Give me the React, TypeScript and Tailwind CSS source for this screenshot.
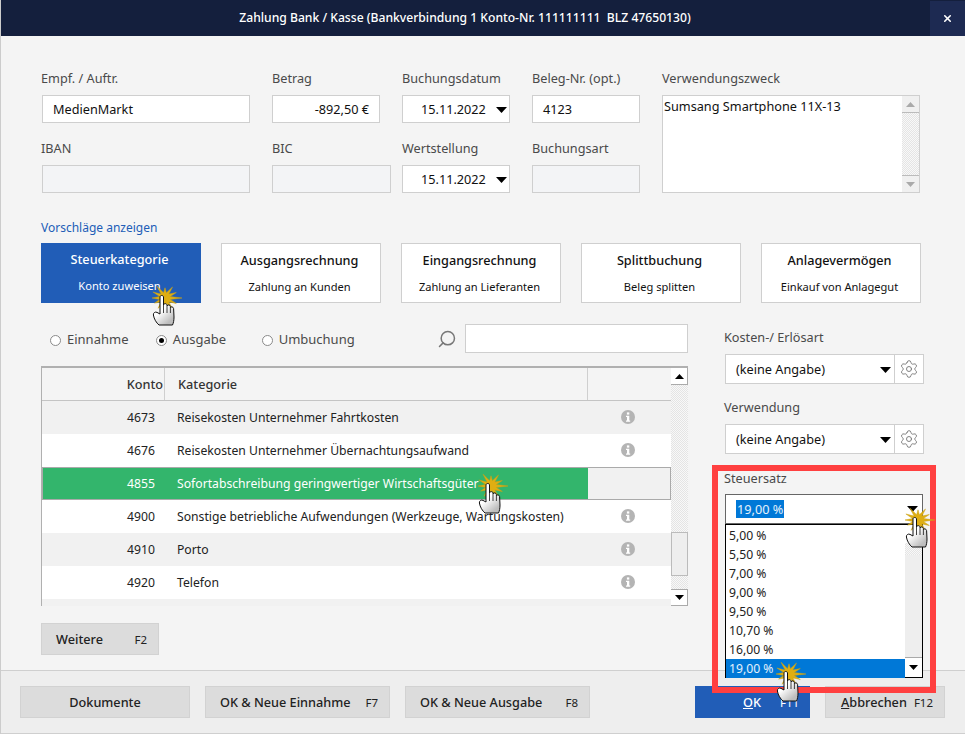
import React from "react";
import { Search, Settings, X } from "lucide-react";

const Arrow = ({ className = "" }: { className?: string }) => (
  <svg width="11" height="6" viewBox="0 0 11 6" className={className}><polygon points="0,0 11,0 5.5,6" fill="#000" /></svg>
);
const ArrowUp = () => (
  <svg width="9" height="5" viewBox="0 0 9 5"><polygon points="0,5 9,5 4.5,0" fill="#000" /></svg>
);
const ArrowDown = () => (
  <svg width="9" height="5" viewBox="0 0 9 5"><polygon points="0,0 9,0 4.5,5" fill="#000" /></svg>
);

const Label = ({ children, className = "" }: { children: React.ReactNode; className?: string }) => (
  <div className={`h-[17px] leading-[17px] text-[12.7px] text-[#4a4a4a] whitespace-nowrap ${className}`}>{children}</div>
);

const boxCls = "border border-[#cfcfcf] h-[28px] flex items-center pt-px text-[12.7px] text-[#111]";

const DateBox = () => (
  <div className={`${boxCls} bg-white w-[108px] justify-between pl-[18px] pr-[2px]`}>
    <span>15.11.2022</span>
    <Arrow />
  </div>
);

const Tile = ({ title, sub, active }: { title: string; sub: string; active?: boolean }) => (
  <div className={`w-[160px] h-[60px] flex flex-col items-center pt-[7px] pr-[3px] ${active ? "bg-[#215db7] text-white" : "bg-white border border-[#cfcfcf] text-[#111]"}`}>
    <div className="text-[12.7px] font-medium leading-[18px]">{title}</div>
    <div className="text-[11.1px] leading-[18px] mt-[9px]">{sub}</div>
  </div>
);

const Radio = ({ label, checked, className = "" }: { label: string; checked?: boolean; className?: string }) => (
  <div className={`flex items-center gap-[6px] pt-[3px] text-[13px] text-[#4a4a4a] ${className}`}>
    <div className="w-[11px] h-[11px] rounded-full bg-white border border-[#8a8a8a] flex items-center justify-center">
      {checked && <div className="w-[5px] h-[5px] rounded-full bg-black" />}
    </div>
    <span>{label}</span>
  </div>
);

const Info = () => (
  <svg width="14" height="14" viewBox="0 0 14 14">
    <circle cx="7" cy="7" r="7" fill="#b4b4b4" />
    <rect x="5.9" y="2.4" width="2.4" height="2.2" fill="#fff" />
    <polygon points="5,5.8 8.3,5.8 8.3,10.6 9.2,10.6 9.2,11.8 5,11.8 5,10.6 6,10.6 6,7 5,7" fill="#fff" />
  </svg>
);

const rows = [
  { k: "4673", t: "Reisekosten Unternehmer Fahrtkosten", bg: "bg-[#f1f1f1]" },
  { k: "4676", t: "Reisekosten Unternehmer Übernachtungsaufwand", bg: "bg-white" },
  { k: "4855", t: "Sofortabschreibung geringwertiger Wirtschaftsgüter", bg: "", sel: true },
  { k: "4900", t: "Sonstige betriebliche Aufwendungen (Werkzeuge, Wartungskosten)", bg: "bg-white" },
  { k: "4910", t: "Porto", bg: "bg-[#f1f1f1]" },
  { k: "4920", t: "Telefon", bg: "bg-white" },
];

const dither = "bg-[repeating-conic-gradient(#e4e4e4_0_25%,#f8f8f8_0_50%)] bg-[length:2px_2px]";

const GearSelect = () => (
  <div className="ml-px w-[199px] h-[30px] flex border border-[#cfcfcf] bg-white text-[12.7px] text-[#111]">
    <div className="flex-1 flex items-center justify-between pt-px pl-[10px] pr-[3px]">
      <span>(keine Angabe)</span>
      <Arrow />
    </div>
    <div className="w-[29px] border-l border-[#cfcfcf] flex items-center justify-center">
      <Settings size={20} strokeWidth={1.1} color="#777" />
    </div>
  </div>
);

const FootBtn = ({ children, k, className = "" }: { children: React.ReactNode; k?: string; className?: string }) => (
  <div className={`h-[32px] pt-px bg-[#dcdcdc] border border-[#d2d2d2] flex items-center text-[12.7px] font-medium text-[#222] whitespace-nowrap ${className}`}>
    <span>{children}</span>
    {k && <span className="text-[11.5px] font-normal ml-auto">{k}</span>}
  </div>
);

const starPts = (() => {
  const outer = [17, 13, 16, 12, 14, 12, 13, 14, 16, 12, 15, 13];
  const pts: string[] = [];
  outer.forEach((r, i) => {
    const a = (i / outer.length) * Math.PI * 2;
    const b = ((i + 0.5) / outer.length) * Math.PI * 2;
    pts.push(`${(25 + Math.cos(a) * r).toFixed(1)},${(14 + Math.sin(a) * r * 0.85).toFixed(1)}`);
    pts.push(`${(25 + Math.cos(b) * 5.5).toFixed(1)},${(14 + Math.sin(b) * 5.5).toFixed(1)}`);
  });
  return pts.join(" ");
})();

const Hand = ({ x, y }: { x: number; y: number }) => (
  <svg width="44" height="44" viewBox="0 0 44 44" className="absolute" style={{ left: x - 22, top: y - 14 }}>
    <defs>
      <linearGradient id="handg" x1="0" y1="0" x2="0.6" y2="1">
        <stop offset="0.55" stopColor="#ffffff" />
        <stop offset="1" stopColor="#bdbdbd" />
      </linearGradient>
    </defs>
    <polygon points={starPts} fill="#dfae12" stroke="#c8a015" strokeWidth="0.5" />
    <path
      d="M20 13 C20 11 23.5 11 23.5 13 L23.5 21 C24 19 27 19.3 27 21.3 L27 22 C27.6 20.3 30.4 20.6 30.4 22.6 L30.4 23.6 C31 22.4 33.4 22.7 33.6 24.6 L34 33 C34 36 33.5 39 32.5 41 L19 41 C16.5 39 14 35 13.4 31 C13 29 15.2 27.4 17 28.4 L20 30 Z"
      fill="url(#handg)"
      stroke="#111"
      strokeWidth="1"
      strokeLinejoin="round"
    />
    <path d="M23.5 21 L23.5 29 M27 22 L27 29 M30.4 23.6 L30.4 29" stroke="#111" strokeWidth="0.8" fill="none" />
  </svg>
);

export default function App() {
  return (
    <div className="relative w-[965px] h-[734px] overflow-hidden flex flex-col bg-[#f4f4f4] border-l border-[#cccccc] [font-family:'Noto_Sans',sans-serif]">
      {/* title bar */}
      <div className="h-[36px] -ml-px flex bg-[#141f3d] text-white shrink-0">
        <div className="flex-1 flex items-center justify-center text-[12.15px] font-medium">
          Zahlung Bank / Kasse (Bankverbindung 1 Konto-Nr. 111111111&nbsp; BLZ 47650130)
        </div>
        <div className="w-[35px] mt-px bg-[#1d2a52] flex items-center justify-center">
          <X size={11} strokeWidth={3.5} color="#fff" />
        </div>
      </div>

      {/* main */}
      <div className="flex-1 pl-[40px] pt-[34px] min-h-0">
        {/* form */}
        <div className="grid grid-cols-[231px_130px_130px_130px_258px]">
          <Label>Empf. / Auftr.</Label>
          <Label>Betrag</Label>
          <Label>Buchungsdatum</Label>
          <Label>Beleg-Nr. (opt.)</Label>
          <Label>Verwendungszweck</Label>
        </div>
        <div className="grid grid-cols-[231px_130px_130px_130px_258px] mt-[8px]">
          <div className="flex flex-col">
            <div className={`${boxCls} bg-white ml-px w-[208px] pl-[10px]`}>MedienMarkt</div>
            <Label className="mt-[17px] mb-[8px]">IBAN</Label>
            <div className={`${boxCls} bg-[#f3f4f6] ml-px w-[208px]`} />
          </div>
          <div className="flex flex-col">
            <div className={`${boxCls} bg-white w-[108px] justify-end pr-[10px]`}>-892,50 €</div>
            <Label className="mt-[17px] mb-[8px]">BIC</Label>
            <div className={`${boxCls} bg-[#f3f4f6] w-[119px]`} />
          </div>
          <div className="flex flex-col">
            <DateBox />
            <Label className="mt-[17px] mb-[8px]">Wertstellung</Label>
            <DateBox />
          </div>
          <div className="flex flex-col">
            <div className={`${boxCls} bg-white w-[108px] pl-[10px]`}>4123</div>
            <Label className="mt-[17px] mb-[8px]">Buchungsart</Label>
            <div className={`${boxCls} bg-[#f3f4f6] w-[108px]`} />
          </div>
          <div className="h-[98px] w-[258px] flex border border-[#cfcfcf] bg-white text-[12.7px] text-[#111]">
            <div className="flex-1 pl-[1px] leading-[20px]">Sumsang Smartphone 11X-13</div>
            <div className={`w-[17px] flex flex-col justify-between ${dither}`}>
              <div className="h-[17px] bg-[#f0f0f0] border-b border-[#bbb] flex items-center justify-center"><svg width="9" height="5" viewBox="0 0 9 5"><polygon points="0,5 9,5 4.5,0" fill="#aaa" /></svg></div>
              <div className="h-[17px] bg-[#f0f0f0] border-t border-[#bbb] flex items-center justify-center"><svg width="9" height="5" viewBox="0 0 9 5"><polygon points="0,0 9,0 4.5,5" fill="#aaa" /></svg></div>
            </div>
          </div>
        </div>

        <div className="mt-[27px] h-[16px] leading-[16px] text-[12px] text-[#215db7]">Vorschläge anzeigen</div>
        <div className="mt-[7px] flex gap-[20px]">
          <Tile active title="Steuerkategorie" sub="Konto zuweisen" />
          <Tile title="Ausgangsrechnung" sub="Zahlung an Kunden" />
          <Tile title="Eingangsrechnung" sub="Zahlung an Lieferanten" />
          <Tile title="Splittbuchung" sub="Beleg splitten" />
          <Tile title="Anlagevermögen" sub="Einkauf von Anlagegut" />
        </div>

        <div className="flex">
          {/* left column */}
          <div className="w-[647px]">
            <div className="mt-[21px] h-[29px] flex items-center">
              <Radio label="Einnahme" className="ml-[9px] w-[106px]" />
              <Radio label="Ausgabe" checked className="w-[106px]" />
              <Radio label="Umbuchung" className="w-[176px]" />
              <Search size={20} strokeWidth={1.8} color="#777" className="-scale-x-100 mr-[8px]" />
              <div className="w-[223px] h-[29px] bg-white border border-[#cfcfcf]" />
            </div>
            <div className="mt-[13px] h-[240px] flex border-t-2 border-l border-[#b0b0b0]">
              <div className="w-[629px] flex flex-col overflow-hidden">
                <div className="h-[33px] shrink-0 flex bg-[#f4f4f4] border-b border-[#c4c4c4] text-[12.7px] font-medium text-[#333]">
                  <div className="w-[123px] pr-[1px] pt-px border-r border-[#cfcfcf] flex items-center justify-end">Konto</div>
                  <div className="w-[423px] pl-[13px] pt-px border-r border-[#cfcfcf] flex items-center">Kategorie</div>
                </div>
                {rows.map((r) =>
                  r.sel ? (
                    <div key={r.k} className="h-[33px] shrink-0 flex border border-[#aaa] text-[12.2px] text-white">
                      <div className="w-[545px] bg-[#33b56c] pt-px flex items-center">
                        <div className="w-[112px] text-right">{r.k}</div>
                        <div className="pl-[22px] whitespace-nowrap">{r.t}</div>
                      </div>
                      <div className="flex-1 bg-[#f1f1f1]" />
                    </div>
                  ) : (
                    <div key={r.k} className={`h-[33px] shrink-0 pt-px flex items-center text-[12.2px] text-[#222] ${r.bg}`}>
                      <div className="w-[113px] text-right">{r.k}</div>
                      <div className="w-[433px] pl-[22px] whitespace-nowrap">{r.t}</div>
                      <div className="flex-1 flex justify-center pr-[4px] -mt-[2px]"><Info /></div>
                    </div>
                  )
                )}
                <div className="h-[8px] shrink-0 bg-[#f1f1f1]" />
              </div>
              <div className={`w-[17px] flex flex-col ${dither}`}>
                <div className="h-[17px] bg-white border-b border-r border-[#aaa] flex items-center justify-center"><ArrowUp /></div>
                <div className="mt-[147px] h-[44px] bg-[#eeeeee] border border-[#bbb]" />
                <div className="mt-auto h-[17px] bg-white border-t border-r border-b border-[#aaa] flex items-center justify-center"><ArrowDown /></div>
              </div>
            </div>
            <div className="mt-[17px] w-[118px] h-[32px] pt-px bg-[#dcdcdc] border border-[#d2d2d2] flex items-center pl-[14px] pr-[11px] text-[12.7px] font-medium text-[#222]">
              Weitere
              <span className="ml-auto text-[11.5px] font-normal">F2</span>
            </div>
          </div>

          {/* right column */}
          <div className="ml-[36px] w-[205px]">
            <Label className="mt-[26px] mb-[8px]">Kosten-/ Erlösart</Label>
            <GearSelect />
            <Label className="mt-[15px] mb-[8px]">Verwendung</Label>
            <GearSelect />
            <Label className="mt-[16px] mb-[7px]">Steuersatz</Label>
            <div className="ml-px w-[198px] h-[30px] border border-[#666] bg-white flex items-center pl-[10px] pr-[4px] justify-between text-[12.7px]">
              <span className="bg-[#0078d7] text-white/90 px-px leading-[18px]">19,00 %</span>
              <Arrow />
            </div>
          </div>
        </div>
      </div>

      {/* footer */}
      <div className="h-[64px] shrink-0 bg-[#eeeeee] border-t border-b border-[#cfcfcf] -ml-px pl-[20px] pt-[15px] flex">
        <FootBtn className="w-[170px] justify-center">Dokumente</FootBtn>
        <FootBtn k="F7" className="ml-[15px] w-[185px] pl-[14px] pr-[11px]">OK &amp; Neue Einnahme</FootBtn>
        <FootBtn k="F8" className="ml-[15px] w-[185px] pl-[14px] pr-[11px]">OK &amp; Neue Ausgabe</FootBtn>
        <div className="ml-[105px] w-[115px] h-[32px] pt-px bg-[#215db7] text-white flex items-center text-[12.7px] font-medium pl-[48px]">
          <span><span className="underline">O</span>K</span>
          <span className="ml-[19px] text-[11.5px] font-normal">F11</span>
        </div>
        <FootBtn k="F12" className="ml-[15px] w-[120px] pl-[15px] pr-[11px]">
          <span className="underline">A</span>bbrechen
        </FootBtn>
      </div>

      {/* open dropdown list */}
      <div className="absolute left-[724px] top-[524px] w-[198px] h-[154px] bg-white border border-black flex text-[12.2px] text-[#222]">
        <div className="flex-1 pt-px">
          {["5,00 %", "5,50 %", "7,00 %", "9,00 %", "9,50 %", "10,70 %", "16,00 %"].map((v) => (
            <div key={v} className="h-[19px] leading-[19px] pl-[3px]">{v}</div>
          ))}
          <div className="h-[19px] leading-[19px] pl-[3px] bg-[#0078d7] text-white/90">19,00 %</div>
        </div>
        <div className={`w-[17px] flex flex-col ${dither}`}>
          <div className="h-[18px] bg-white" />
          <div className="mt-[12px] h-[103px] bg-[#eeeeee] border-b border-[#aaa]" />
          <div className="mt-auto h-[19px] bg-white flex items-center justify-center"><ArrowDown /></div>
        </div>
      </div>

      {/* red highlight */}
      <div className="absolute left-[711px] top-[465px] w-[224px] h-[228px] border-[6px] border-[#ff4040] pointer-events-none" />

      <Hand x={161} y={298} />
      <Hand x={487} y={486} />
      <Hand x={914} y={520} />
      <Hand x={785} y={674} />
    </div>
  );
}
